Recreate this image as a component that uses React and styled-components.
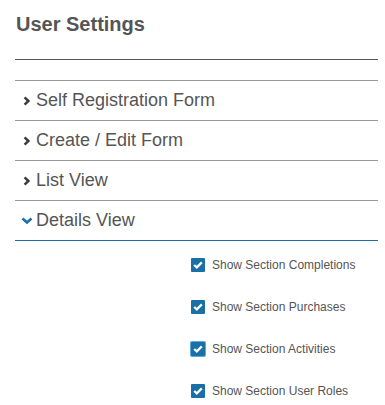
import React from "react";
import styled, { createGlobalStyle } from "styled-components";

const GlobalStyle = createGlobalStyle`
  body {
    margin: 0;
    background: #fff;
    font-family: "Liberation Sans", Arial, sans-serif;
  }
`;

const Page = styled.div`
  padding: 0 7px 0 15px;
`;

const Title = styled.h2`
  margin: 0;
  padding: 12px 0 23px 1px;
  font-size: 20px;
  line-height: 24px;
  font-weight: bold;
  color: #555;
  border-bottom: 1px solid #555;
`;

const Accordion = styled.div`
  margin-top: 20px;
  border-top: 1px solid #999;
`;

const Header = styled.div`
  display: flex;
  align-items: center;
  height: 39px;
  border-bottom: 1px solid ${(p) => (p.$open ? "#1a6fa6" : "#999")};
  font-size: 18px;
  color: #555;
  cursor: pointer;
`;

const IconBox = styled.span`
  display: flex;
  align-items: center;
  justify-content: center;
  width: 13px;
  margin: 0 3px 0 5px;
`;

const Options = styled.div`
  padding: 3px 0 0 176px;
`;

const OptionRow = styled.label`
  display: flex;
  align-items: center;
  height: 42px;
  font-size: 12px;
  color: #555;
`;

const Box = styled.span`
  box-sizing: border-box;
  display: flex;
  align-items: center;
  justify-content: center;
  width: 14px;
  height: 14px;
  margin-right: 7px;
  background: #1a6fa6;
  border-radius: 1px;
  box-shadow: ${(p) => (p.$focus ? "0 0 0 1px #5aaae6" : "none")};
`;

const Chevron = ({ open }) =>
  open ? (
    <svg width="12" height="8" viewBox="0 0 12 8">
      <polyline
        points="1.5,1.5 6,5.5 10.5,1.5"
        fill="none"
        stroke="#1a6fa6"
        strokeWidth="2.6"
      />
    </svg>
  ) : (
    <svg width="8" height="10" viewBox="0 0 8 10">
      <polyline
        points="1.6,1.4 5.4,5 1.6,8.6"
        fill="none"
        stroke="#3d3d3d"
        strokeWidth="2.5"
      />
    </svg>
  );

const Check = () => (
  <svg width="10" height="8" viewBox="0 0 10 8">
    <polyline
      points="1.2,4 3.8,6.4 8.8,1.4"
      fill="none"
      stroke="#fff"
      strokeWidth="2.2"
    />
  </svg>
);

const sections = [
  { title: "Self Registration Form" },
  { title: "Create / Edit Form" },
  { title: "List View" },
  { title: "Details View", open: true },
];

const options = [
  "Show Section Completions",
  "Show Section Purchases",
  "Show Section Activities",
  "Show Section User Roles",
];

export default function App() {
  return (
    <>
      <GlobalStyle />
      <Page>
        <Title>User Settings</Title>
        <Accordion>
          {sections.map((s) => (
            <React.Fragment key={s.title}>
              <Header $open={s.open}>
                <IconBox>
                  <Chevron open={s.open} />
                </IconBox>
                {s.title}
              </Header>
              {s.open && (
                <Options>
                  {options.map((o, i) => (
                    <OptionRow key={o}>
                      <Box $focus={i === 2}>
                        <Check />
                      </Box>
                      {o}
                    </OptionRow>
                  ))}
                </Options>
              )}
            </React.Fragment>
          ))}
        </Accordion>
      </Page>
    </>
  );
}
